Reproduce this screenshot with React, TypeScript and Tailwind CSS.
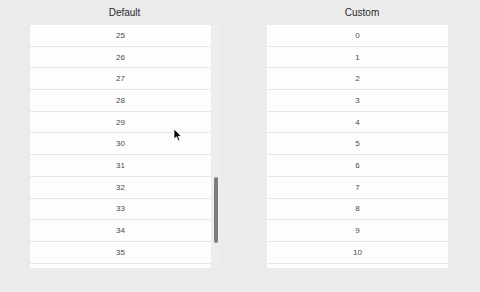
import React from "react";

const Row = ({ n }: { n?: number }) => (
  <div className="h-[21.7px] shrink-0 border-b border-[#e8e7e8] bg-[#fefdfe] flex items-center justify-center pt-[1px] text-[8px] text-[#4a4a4a]">
    {n}
  </div>
);

export default function App() {
  const left = Array.from({ length: 11 }, (_, i) => 25 + i);
  const right = Array.from({ length: 11 }, (_, i) => i);
  return (
    <div
      className="relative w-[480px] h-[292px] bg-[#ecebec] overflow-hidden flex pl-[30px] gap-[47px]"
      style={{ fontFamily: '"Liberation Sans", Arial, sans-serif' }}
    >
      <div className="w-[190px] flex flex-col">
        <div className="h-[25px] flex items-start justify-center text-[10px] text-[#2a2a2a] pt-[5px] pr-[1px]">Default</div>
        <div className="flex">
          <div className="w-[181px] h-[243px] overflow-hidden flex flex-col">
            {left.map((n) => (
              <Row key={n} n={n} />
            ))}
            <Row />
          </div>
          <div className="w-[9px] h-[243px] bg-[#eeedee] pl-[3px] pt-[152px]">
            <div className="w-[4px] h-[66px] rounded-full bg-[#7c7c7c]" />
          </div>
        </div>
      </div>
      <div className="w-[190px] flex flex-col">
        <div className="h-[25px] flex items-start justify-center text-[10px] text-[#2a2a2a] pt-[5px]">Custom</div>
        <div className="flex">
          <div className="w-[181px] h-[243px] overflow-hidden flex flex-col">
            {right.map((n) => (
              <Row key={n} n={n} />
            ))}
            <Row />
          </div>
        </div>
      </div>
      <svg
        className="absolute left-[173px] top-[128px]"
        width="10"
        height="14"
        viewBox="0 0 10 14"
      >
        <path d="M1 1 L1 11 L3.5 8.8 L5.3 12.8 L6.9 12.1 L5.2 8.3 L8.4 8.3 Z" fill="#000" stroke="#fff" strokeWidth="0.8" strokeLinejoin="round" />
      </svg>
    </div>
  );
}
